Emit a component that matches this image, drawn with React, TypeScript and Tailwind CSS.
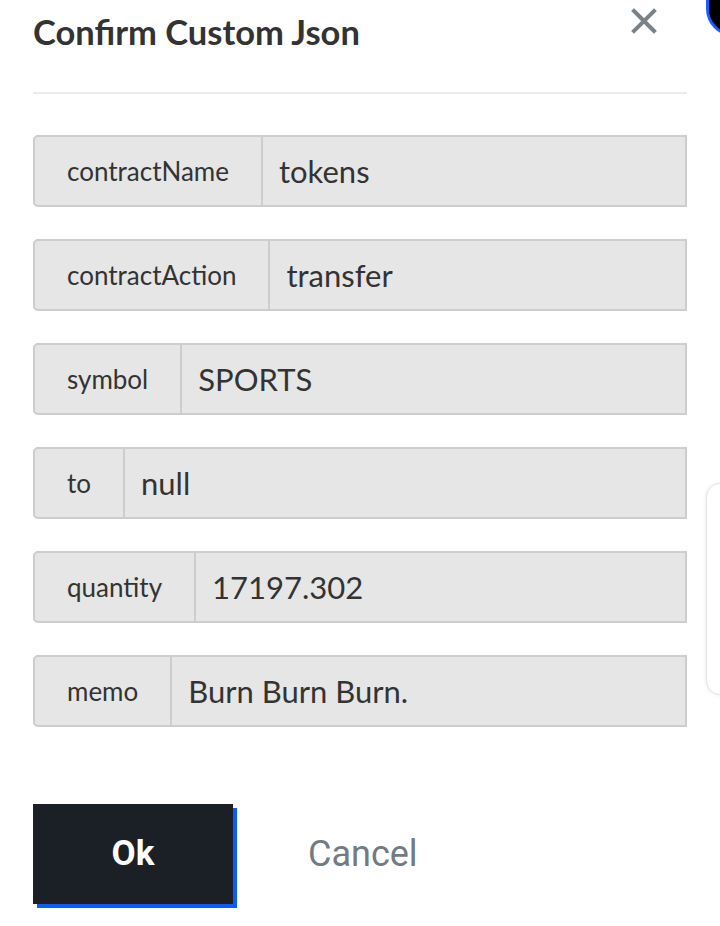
import React from "react";

const fields = [
  { label: "contractName", value: "tokens" },
  { label: "contractAction", value: "transfer" },
  { label: "symbol", value: "SPORTS" },
  { label: "to", value: "null" },
  { label: "quantity", value: "17197.302" },
  { label: "memo", value: "Burn Burn Burn." },
];

function CloseIcon() {
  return (
    <svg width="26" height="26" viewBox="0 0 26 26" className="text-[#7a8288]">
      <path d="M3 3 L23 23 M23 3 L3 23" stroke="currentColor" strokeWidth="4" strokeLinecap="square" />
    </svg>
  );
}

export default function App() {
  return (
    <div className="relative w-[720px] h-[926px] bg-white overflow-hidden font-['Lato','Noto_Sans',sans-serif]">
      {/* things peeking from behind the modal */}
      <div className="absolute right-[-40px] top-[-30px] w-[54px] h-[66px] rounded-full bg-black border-l-[3px] border-b-[3px] border-[#1a5cff]" />
      <div className="absolute right-[-20px] top-[483px] w-[34px] h-[212px] rounded-[14px] border border-[#e4e4e4] shadow-[0_0_4px_rgba(0,0,0,0.08)] bg-white" />

      <div className="px-[33px] pt-[12px]">
        <div className="flex items-start justify-between">
          <h1 className="text-[34.5px] font-bold text-[#333] leading-[40px]">Confirm Custom Json</h1>
          <button className="mt-[-4px] mr-[30px]">
            <CloseIcon />
          </button>
        </div>
        <div className="mt-[40px] h-[2px] bg-[#ececec]" />

        <div className="mt-[41px] flex flex-col gap-[32px]">
          {fields.map((f) => (
            <div key={f.label} className="flex h-[72px] border-2 border-[#cdcdcd] rounded-l-[5px] bg-[#e6e6e6]">
              <div className="flex items-center px-[32px] text-[26px] text-[#333] border-r-2 border-[#cdcdcd]">
                {f.label}
              </div>
              <div className="flex-1 flex items-center px-[16px] text-[31px] text-[#333]">{f.value}</div>
            </div>
          ))}
        </div>

        <div className="mt-[77px] flex items-center">
          <button className="w-[200px] h-[100px] bg-[#1b2027] text-white text-[35px] font-bold shadow-[4px_4px_0_#0a5cff] font-['Roboto',sans-serif]">
            Ok
          </button>
          <button className="ml-[75px] text-[36px] text-[#727b83] font-['Roboto',sans-serif]">Cancel</button>
        </div>
      </div>
    </div>
  );
}
